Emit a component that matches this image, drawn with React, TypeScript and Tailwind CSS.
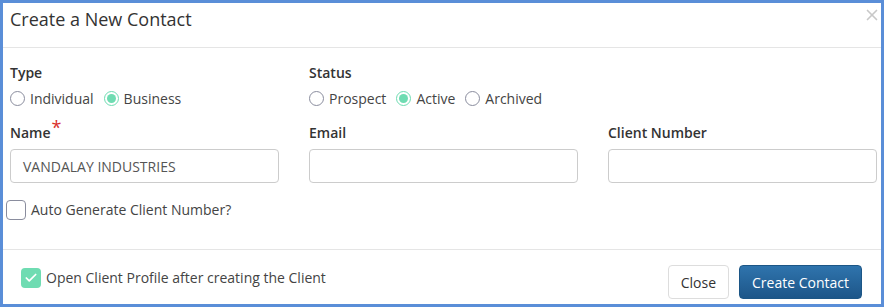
import { X, Check } from "lucide-react";

const Radio = ({ label, checked }: { label: string; checked?: boolean }) => {
  return (
    <label className="flex items-center gap-[5px]">
      <span
        className={
          checked
            ? "flex h-[15px] w-[15px] items-center justify-center rounded-full border border-[#6fdcb2]"
            : "h-[15px] w-[15px] rounded-full border border-[#8a8d9e]"
        }
      >
        {checked && <span className="h-[9px] w-[9px] rounded-full bg-[#6fdcb2]" />}
      </span>
      <span>{label}</span>
    </label>
  );
};

const Field = ({ label, value, required }: { label: string; value?: string; required?: boolean }) => {
  return (
    <div className="flex flex-col">
      <div className="flex h-[26px] items-center font-semibold text-[#333]">
        {label}
        {required && <span className="relative -top-[5px] ml-[1px] text-[18px] font-normal text-[#d9302c]">*</span>}
      </div>
      <div className="mt-[4px] flex h-[34px] items-center rounded-[4px] border border-[#cccccc] px-[12px] text-[#555]">
        {value}
      </div>
    </div>
  );
};

export default function App() {
  return (
    <div
      className="box-border flex h-[307px] w-[884px] flex-col border-[3px] border-[#5a8ed8] bg-white text-[14px] text-[#444]"
      style={{ fontFamily: '"Open Sans", sans-serif' }}
    >
      {/* header */}
      <div className="flex h-[45px] shrink-0 items-start justify-between border-b border-[#e5e5e5] pl-[7px] pr-0">
        <h4 className="mt-[3px] text-[18px] text-[#333]">Create a New Contact</h4>
        <X className="mt-[3px] h-[18px] w-[18px] text-[#c8c8c8]" strokeWidth={2.2} />
      </div>

      {/* body */}
      <div className="flex-1 pl-[7px] pr-[4px] pt-[14px]">
        <div className="grid grid-cols-3 gap-x-[30px]">
          <div>
            <div className="font-semibold text-[#333]">Type</div>
            <div className="mt-[5px] flex gap-[10px]">
              <Radio label="Individual" />
              <Radio label="Business" checked />
            </div>
          </div>
          <div>
            <div className="font-semibold text-[#333]">Status</div>
            <div className="mt-[5px] flex gap-[10px]">
              <Radio label="Prospect" />
              <Radio label="Active" checked />
              <Radio label="Archived" />
            </div>
          </div>
          <div />
        </div>

        <div className="mt-[10px] grid grid-cols-3 gap-x-[30px]">
          <Field label="Name" value="VANDALAY INDUSTRIES" required />
          <Field label="Email" />
          <Field label="Client Number" />
        </div>

        <label className="-ml-[4px] mt-[16px] flex items-center gap-[5px]">
          <span className="h-[20px] w-[20px] rounded-[4px] border border-[#8a8d9e]" />
          <span>Auto Generate Client Number?</span>
        </label>
      </div>

      {/* footer */}
      <div className="flex h-[55px] shrink-0 items-start justify-between border-t border-[#e5e5e5] pl-[18px] pr-[19px]">
        <label className="mt-[17px] flex items-center gap-[5px]">
          <span className="flex h-[20px] w-[20px] items-center justify-center rounded-[4px] bg-[#6fdcb2]">
            <Check className="h-[14px] w-[14px] text-white" strokeWidth={3} />
          </span>
          <span>Open Client Profile after creating the Client</span>
        </label>
        <div className="mt-[15px] flex gap-[10px]">
          <button className="h-[34px] rounded-[4px] border border-[#dddddd] bg-white px-[12px] text-[#333]">
            Close
          </button>
          <button className="h-[34px] rounded-[4px] border border-[#1c5686] bg-gradient-to-b from-[#2f74ad] to-[#1d5689] px-[12px] text-white">
            Create Contact
          </button>
        </div>
      </div>
    </div>
  );
}
